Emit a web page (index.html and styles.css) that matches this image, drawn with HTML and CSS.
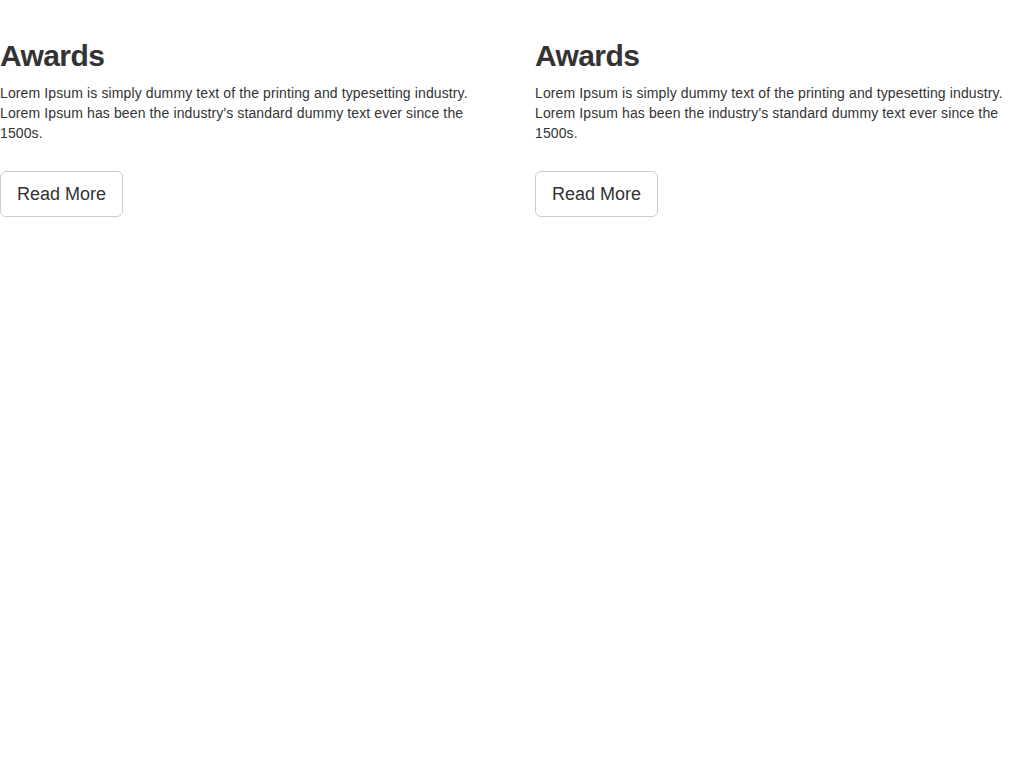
FILE: index.html
```html
<!DOCTYPE html>
<html>
<head>
<meta charset="utf-8">
<link rel="stylesheet" href="styles.css">
</head>
<body>
<div class="row">
  <div class="col">
    <h2 class="title">Awards</h2>
    <p class="text">Lorem Ipsum is simply dummy text of the printing and typesetting industry. Lorem Ipsum has been the industry's standard dummy text ever since the 1500s.</p>
    <a class="btn" href="#">Read More</a>
  </div>
  <div class="col">
    <h2 class="title">Awards</h2>
    <p class="text">Lorem Ipsum is simply dummy text of the printing and typesetting industry. Lorem Ipsum has been the industry's standard dummy text ever since the 1500s.</p>
    <a class="btn" href="#">Read More</a>
  </div>
</div>
</body>
</html>
```
FILE: styles.css
```css
html, body {
  margin: 0;
  padding: 0;
  background: #fff;
}
body {
  font-family: "Liberation Sans", Arial, sans-serif;
  font-size: 14px;
  line-height: 20px;
  color: #333;
}
.row {
  display: grid;
  grid-template-columns: 489px 489px;
  column-gap: 46px;
  padding-top: 39px;
}
.col {
  display: flex;
  flex-direction: column;
  align-items: flex-start;
}
.title {
  margin: 0 0 11px;
  font-size: 30px;
  line-height: 33px;
  font-weight: bold;
  letter-spacing: -0.6px;
  color: #333;
}
.text {
  margin: 0 0 28px;
  letter-spacing: 0.12px;
}
.btn {
  display: inline-block;
  padding: 10px 16px;
  font-size: 18px;
  line-height: 24px;
  color: #333;
  text-decoration: none;
  background: #fff;
  border: 1px solid #ccc;
  border-radius: 6px;
}
```
